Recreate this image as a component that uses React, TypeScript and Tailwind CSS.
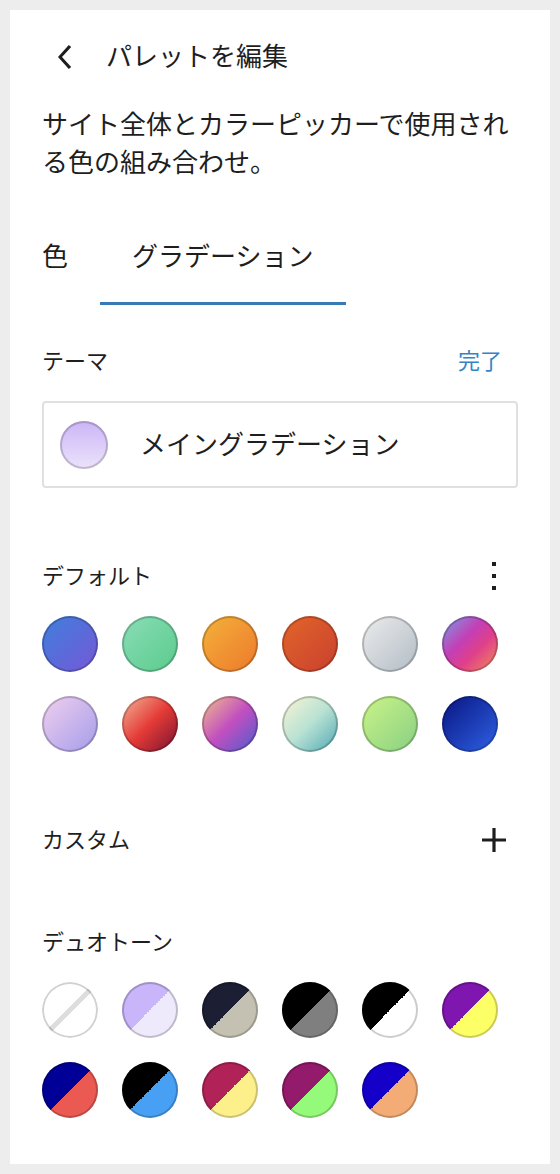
import React from "react";

const font = "font-['Noto_Sans_CJK_JP','Noto_Sans',sans-serif]";

// default gradients, written out in full so tailwind picks them up
const defaults = [
  "bg-[linear-gradient(135deg,#3d80dc_0%,#7757d6_100%)]",
  "bg-[linear-gradient(135deg,#8addb6_0%,#5acb8c_100%)]",
  "bg-[linear-gradient(135deg,#f3b23a_0%,#ee782d_100%)]",
  "bg-[linear-gradient(135deg,#e3652a_0%,#c8402f_100%)]",
  "bg-[linear-gradient(135deg,#ececec_0%,#b1bcc6_100%)]",
  "bg-[linear-gradient(135deg,#6f86d8_0%,#9a74d0_18%,#c33fb6_40%,#df3f8a_62%,#ea6a6e_82%,#f1a66a_100%)]",
  "bg-[linear-gradient(135deg,#f1d0ee_0%,#a49ceb_100%)]",
  "bg-[linear-gradient(135deg,#f3b79a_0%,#e43b37_50%,#761231_100%)]",
  "bg-[linear-gradient(135deg,#f2c18a_0%,#c24fc0_50%,#4a5ccd_100%)]",
  "bg-[linear-gradient(135deg,#fbf5d4_0%,#b9e2d3_50%,#4fa7b5_100%)]",
  "bg-[linear-gradient(135deg,#cbf489_0%,#88cf82_100%)]",
  "bg-[linear-gradient(135deg,#081480_0%,#2f62e6_100%)]",
];

const duotones = [
  "bg-[linear-gradient(135deg,#c9b5f9_50%,#efe9fc_50%)]",
  "bg-[linear-gradient(135deg,#1c1f33_50%,#c4c0b2_50%)]",
  "bg-[linear-gradient(135deg,#000000_50%,#7f7f7f_50%)]",
  "bg-[linear-gradient(135deg,#000000_50%,#ffffff_50%)]",
  "bg-[linear-gradient(135deg,#8016b0_50%,#fcff66_50%)]",
  "bg-[linear-gradient(135deg,#000097_50%,#ea5a53_50%)]",
  "bg-[linear-gradient(135deg,#000000_50%,#48a0f4_50%)]",
  "bg-[linear-gradient(135deg,#b12358_50%,#fdf08b_50%)]",
  "bg-[linear-gradient(135deg,#941a6b_50%,#95fa7a_50%)]",
  "bg-[linear-gradient(135deg,#1400c9_50%,#f3ac76_50%)]",
];

function Swatch({ bg }: { bg: string }) {
  return (
    <div className={`w-14 h-14 rounded-full shadow-[inset_0_0_0_2px_rgba(0,0,0,0.2)] ${bg}`} />
  );
}

function SectionHead({ label, children }: { label: string; children?: React.ReactNode }) {
  return (
    <div className="flex items-center justify-between h-12">
      <span className="text-[22px] text-[#1e1e1e] pb-[4px]">{label}</span>
      {children}
    </div>
  );
}

export default function App() {
  return (
    <div className={`min-h-[1174px] bg-[#ededed] p-[10px] ${font}`}>
      <div className="bg-white h-[1154px] pt-[23px]">
        {/* Header */}
        <div className="flex items-center gap-4 px-8">
          <svg viewBox="0 0 24 24" className="w-12 h-12 fill-[#1e1e1e]">
            <path d="M14.6 7l-1.2-1L8 12l5.4 6 1.2-1-4.6-5z" />
          </svg>
          <h1 className="text-[26px] text-[#1e1e1e] leading-none pb-[4px]">パレットを編集</h1>
        </div>

        <p className="px-8 mt-[23px] text-[26px] leading-[38px] text-[#1e1e1e]">
          サイト全体とカラーピッカーで使用される色の組み合わせ。
        </p>

        {/* Tabs */}
        <div className="flex mt-[29px]">
          <div className="h-24 px-8 pb-[6px] flex items-center text-[26px] text-[#1e1e1e]">色</div>
          <div className="h-24 px-8 pb-[6px] flex items-center text-[26px] text-[#1e1e1e] shadow-[inset_0_-3px_0_#387ab6]">
            グラデーション
          </div>
        </div>

        <div className="px-8">
          {/* Theme */}
          <div className="mt-8">
            <SectionHead label="テーマ">
              <span className="text-[22px] text-[#3582c4] pr-4 pb-[4px]">完了</span>
            </SectionHead>
            <div className="mt-4 border-2 border-[#e0e0e0] rounded-[4px] h-[87px] flex items-center pl-4 gap-8">
              <div className="w-12 h-12 rounded-full bg-[linear-gradient(180deg,#cbb5f6_0%,#ece3fb_100%)] shadow-[inset_0_0_0_2px_rgba(0,0,0,0.18)]" />
              <span className="text-[26px] text-[#1e1e1e] pb-[5px]">メイングラデーション</span>
            </div>
          </div>

          {/* Default */}
          <div className="mt-16">
            <SectionHead label="デフォルト">
              <svg viewBox="0 0 24 24" className="w-12 h-12 fill-[#1e1e1e]">
                <path d="M13 19h-2v-2h2v2zm0-6h-2v-2h2v2zm0-6h-2V5h2v2z" />
              </svg>
            </SectionHead>
            <div className="mt-4 grid grid-cols-[repeat(6,56px)] gap-6">
              {defaults.map((g, i) => (
                <Swatch key={i} bg={g} />
              ))}
            </div>
          </div>

          {/* Custom */}
          <div className="mt-16">
            <SectionHead label="カスタム">
              <svg viewBox="0 0 24 24" className="w-12 h-12 fill-[#1e1e1e]">
                <path d="M18 11.2h-5.2V6h-1.6v5.2H6v1.6h5.2V18h1.6v-5.2H18z" />
              </svg>
            </SectionHead>
          </div>

          {/* Duotone */}
          <div className="mt-[54px]">
            <SectionHead label="デュオトーン" />
            <div className="mt-4 grid grid-cols-[repeat(6,56px)] gap-6">
              <div className="w-14 h-14 rounded-full bg-white bg-[linear-gradient(-45deg,transparent_47%,#dddddd_47%,#dddddd_53%,transparent_53%)] shadow-[inset_0_0_0_2px_rgba(0,0,0,0.18)]" />
              {duotones.map((g, i) => (
                <Swatch key={i} bg={g} />
              ))}
            </div>
          </div>
        </div>
      </div>
    </div>
  );
}
